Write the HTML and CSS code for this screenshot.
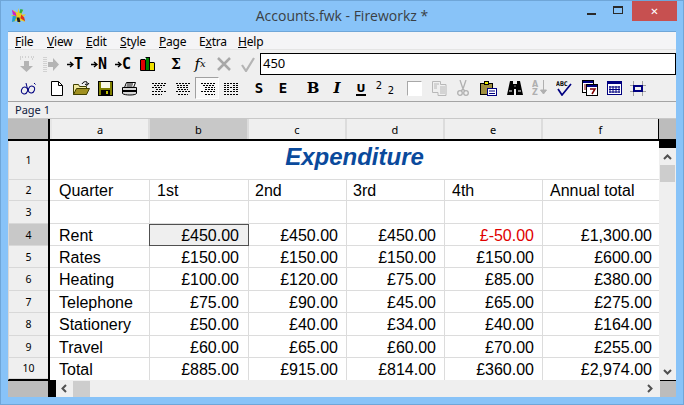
FILE: index.html
```html
<!DOCTYPE html>
<html lang="en">
<head>
<meta charset="utf-8">
<title>Accounts.fwk - Fireworkz *</title>
<link rel="stylesheet" href="styles.css">
</head>
<body>
<div class="window">
  <header class="titlebar">
    <svg class="appicon" width="17" height="17" viewBox="0 0 18 18"><path d="M9 1l1 5 4-3-2 5 5 0-4 3 3 5-5-2-1 4-2-4-5 2 2-5-4-2 5-1-3-5 5 3z" fill="#e8d020"/><path d="M2 3l4 3 1 4-4-2z" fill="#d020c0"/><path d="M3 9l4 1-2 5-3 1z" fill="#20a0d0"/><path d="M12 8l3 3 1 4-5-3z" fill="#e03020"/><path d="M7 11l3 0 1 5-3 0z" fill="#202020"/><path d="M11 2l3 1-2 4-2-1z" fill="#30b040"/></svg>
    <div class="wintitle">Accounts.fwk - Fireworkz *</div>
    <div class="winctl">
      <span class="wbtn"><i class="wmin"></i></span>
      <span class="wbtn"><i class="wmax"></i></span>
      <span class="wclose">✕</span>
    </div>
  </header>
  <div class="client">
    <nav class="menubar">
      <span><u>F</u>ile</span><span><u>V</u>iew</span><span><u>E</u>dit</span><span><u>S</u>tyle</span><span><u>P</u>age</span><span>E<u>x</u>tra</span><span><u>H</u>elp</span>
    </nav>
    <div class="toolbars">
      <div class="tbrow first">
        <span class="tb"><svg width="16" height="16" viewBox="0 0 16 16"><path d="M5 5h5v5h4l-6.500 6L1 10h4z" fill="#b4b4b4"/><path d="M1 1h3M1 3h2M12 1h3M13 3h2M6 1h1M9 1h1" stroke="#b4b4b4" stroke-dasharray="1 1"/></svg></span>
        <span class="tb"><svg width="16" height="17" viewBox="0 0 16 17"><path d="M5 6h5V2l6 6.500-6 6.500v-4H5z" fill="#b4b4b4"/><path d="M1 1v15M3 1v15" stroke="#b4b4b4" stroke-dasharray="1 1"/></svg></span>
        <span class="tb tbt"><svg class="toarrow" width="7" height="7" viewBox="0 0 7 7"><path d="M0 3.500h5M3 1l3 2.500L3 6" fill="none" stroke="#000" stroke-width="1.400"/></svg>T</span>
        <span class="tb tbt"><svg class="toarrow" width="7" height="7" viewBox="0 0 7 7"><path d="M0 3.500h5M3 1l3 2.500L3 6" fill="none" stroke="#000" stroke-width="1.400"/></svg>N</span>
        <span class="tb tbt"><svg class="toarrow" width="7" height="7" viewBox="0 0 7 7"><path d="M0 3.500h5M3 1l3 2.500L3 6" fill="none" stroke="#000" stroke-width="1.400"/></svg>C</span>
        <span class="tb"><svg width="15" height="14" viewBox="0 0 15 14"><rect x="1" y="3" width="5" height="10" fill="#e00000"/><rect x="6" y="1" width="4" height="12" fill="#008000"/><rect x="10" y="6" width="4" height="7" fill="#f0e000"/><path d="M.5 3v10.500h14V6M5.500 3v10M9.500 1v12M14.500 6v8M.5 2.500h5M5.500 .5h4.500M9.500 5.500h5" stroke="#000" fill="none"/></svg></span>
        <span class="tb sp5 tbsig">Σ</span>
        <span class="tb tbfx">f<sub>x</sub></span>
        <span class="tb"><svg width="14" height="14" viewBox="0 0 14 14"><path d="M1 1l12 12M13 1L1 13" stroke="#a8a8a8" stroke-width="2.500"/></svg></span>
        <span class="tb"><svg width="14" height="15" viewBox="0 0 14 15"><path d="M1 8l4 6L13 1" stroke="#b4b4b4" stroke-width="2.200" fill="none"/></svg></span>
        <div class="formula">450</div>
      </div>
      <div class="tbrow second">
        <span class="tb"><svg width="17" height="13" viewBox="0 0 17 13"><ellipse cx="4.500" cy="8.500" rx="3" ry="3.500" fill="none" stroke="#000080" transform="rotate(20 4.500 8.500)"/><ellipse cx="11.500" cy="7.500" rx="3" ry="3.500" fill="none" stroke="#000080" transform="rotate(20 11.500 7.500)"/><path d="M7.500 7.500C8 7 8 7 8.500 7M6 1l1.500 6M14 1l1.500 1.500" stroke="#000080" fill="none"/></svg></span>
        <span class="tb sp5"><svg width="12" height="15" viewBox="0 0 12 15"><path d="M.5 .5h7l4 4v10h-11z" fill="#fff" stroke="#000"/><path d="M7.500 .5v4h4" fill="none" stroke="#000"/></svg></span>
        <span class="tb"><svg width="17" height="14" viewBox="0 0 17 14"><path d="M.5 3.500h5l1 2h7v8H.5z" fill="#f0e8a0" stroke="#404000"/><path d="M.5 13.500l3-6h13l-3 6z" fill="#a09020" stroke="#404000"/><path d="M9 3c1-2 3-3 5-2l0 3M12 3l2 1.500L16 2" fill="none" stroke="#000"/></svg></span>
        <span class="tb"><svg width="15" height="15" viewBox="0 0 15 15"><rect x=".5" y=".5" width="14" height="14" fill="#808000" stroke="#000"/><rect x="3" y="1" width="9" height="6" fill="#f8f8e8"/><rect x="3" y="9" width="9" height="5" fill="#000"/><rect x="8" y="10" width="2" height="3" fill="#c0c000"/></svg></span>
        <span class="tb"><svg width="17" height="15" viewBox="0 0 17 15"><path d="M5.500 1.500h9l-2 5h-9z" fill="#fff" stroke="#000"/><path d="M6 3h6M5.500 5h6" stroke="#000"/><path d="M1.500 6.500h14v6c-1 2-12 2-14 0z" fill="#d8d8d8" stroke="#000"/><path d="M2 10h13" stroke="#000" stroke-width="2"/></svg></span>
        <span class="tb sp6"><svg class="dash" width="14" height="13" viewBox="0 0 14 13"><path d="M0 1.500h14M0 5.500h10M0 9.500h14M0 12.500h10M2 3.500h12M4 7.500h6"/></svg></span>
        <span class="tb"><svg class="dash" width="14" height="13" viewBox="0 0 14 13"><path d="M0 1.500h14M1 5.500h12M0 9.500h14M2 12.500h10M1 3.500h12M2 7.500h10"/></svg></span>
        <span class="tb tbsel"><svg class="dash" width="14" height="13" viewBox="0 0 14 13"><path d="M0 1.500h14M4 5.500h10M0 9.500h14M4 12.500h10M2 3.500h12M4 7.500h10"/></svg></span>
        <span class="tb"><svg class="dash" width="14" height="13" viewBox="0 0 14 13"><path d="M0 1.500h14M0 5.500h14M0 9.500h14M0 12.500h14M0 3.500h5M9 3.500h5M0 7.500h5M9 7.500h5"/></svg></span>
        <span class="tb sp4 tbs">S</span>
        <span class="tb tbs">E</span>
        <span class="tb sp6 tbb">B</span>
        <span class="tb tbi">I</span>
        <span class="tb tbu"><span class="uline">U</span></span>
        <span class="tbn up">2</span>
        <span class="tbn down">2</span>
        <span class="tb sp5"><i class="swatch"></i></span>
        <span class="tb sp1"><svg width="15" height="15" viewBox="0 0 15 15"><path d="M.5 .5h8v3h5.500v11h-8v-3h-5.500z" fill="none" stroke="#b8b8b8"/><path d="M2 3h5M2 5h3M2 7h3M8 6h5M8 8h5M8 10h5M8 12h5" stroke="#b8b8b8"/></svg></span>
        <span class="tb"><svg width="12" height="16" viewBox="0 0 12 16"><path d="M3 0l3 9 3-9M6 9L4 11M6 9l2 2" stroke="#b0b0b0" stroke-width="1.300" fill="none"/><circle cx="3" cy="13" r="2.300" fill="none" stroke="#b0b0b0" stroke-width="1.300"/><circle cx="9" cy="13" r="2.300" fill="none" stroke="#b0b0b0" stroke-width="1.300"/></svg></span>
        <span class="tb sp1"><svg width="17" height="15" viewBox="0 0 17 15"><rect x=".5" y="2.500" width="12" height="11" fill="#a09040" stroke="#000"/><rect x="4.500" y=".5" width="4" height="3" fill="#f0f000" stroke="#000"/><rect x="7.500" y="7.500" width="9" height="7" fill="#fff" stroke="#000080"/><path d="M9 10h6M9 12.500h6" stroke="#000080"/></svg></span>
        <span class="tb sp3"><svg width="16" height="14" viewBox="0 0 16 14"><path d="M3 0h3v3h4V0h3l3 14H9V8H7v6H0z" fill="#000"/><path d="M7.500 5h1" stroke="#fff"/><path d="M2 10h3M11 10h3" stroke="#fff"/></svg></span>
        <span class="tb sp1"><svg width="16" height="16" viewBox="0 0 16 16"><text class="az" x="0" y="7">A</text><text class="az" x="0" y="15">Z</text><path d="M11.500 0v11M8.500 10h6l-3 4z" stroke="#b0b0b0" fill="#b0b0b0"/></svg></span>
        <span class="tb"><svg width="16" height="16" viewBox="0 0 16 16"><text class="abc" x="0" y="6">ABC</text><path d="M2 9l4 6L15 4" fill="none" stroke="#000080" stroke-width="1.700"/></svg></span>
        <span class="tb sp2"><svg width="16" height="16" viewBox="0 0 16 16"><rect x=".5" y=".5" width="11" height="12" fill="#fff" stroke="#000"/><rect x="1" y="1" width="10" height="2" fill="#000080"/><rect x="4.500" y="4.500" width="11" height="11" fill="#fff" stroke="#000"/><rect x="5" y="5" width="10" height="2" fill="#000080"/><path d="M8 9h5l-3 5" fill="none" stroke="#800000" stroke-width="1.500"/><path d="M2 5h2M2 7h2M2 9h2" stroke="#800000"/></svg></span>
        <span class="tb"><svg width="15" height="14" viewBox="0 0 15 14"><rect x=".5" y=".5" width="14" height="13" fill="#fff" stroke="#000080"/><rect x="1" y="1" width="13" height="2" fill="#000080"/><path d="M3 5v7M6 5v7M9 5v7M12 5v7M2 6h11M2 8.500h11M2 11h11" stroke="#000080"/></svg></span>
        <span class="tb"><svg width="16" height="15" viewBox="0 0 16 15"><path d="M0 4.500h16M0 10.500h16M3.500 0v15M12.500 0v15" stroke="#a0a0a0"/><rect x="4" y="5" width="8" height="5" fill="#f0f0f0" stroke="#000080" stroke-width="2"/></svg></span>
      </div>
    </div>
    <div class="pagebar">Page 1</div>
    <div class="sheet">
      <div class="colhead">
        <div class="corner-l"></div>
        <div class="bar-v"></div>
        <div class="ch c1">a</div>
        <div class="ch c2 on">b</div>
        <div class="ch c3">c</div>
        <div class="ch c4">d</div>
        <div class="ch c5">e</div>
        <div class="ch c6">f</div>
        <div class="bar-v thin"></div>
        <div class="corner-r"></div>
      </div>
      <div class="sheetbody">
        <div class="rowheads">
          <div class="rh r1">1</div><div class="rh r2">2</div><div class="rh r3">3</div><div class="rh r4 on">4</div><div class="rh r5">5</div><div class="rh r6">6</div><div class="rh r7">7</div><div class="rh r8">8</div><div class="rh r9">9</div><div class="rh r10">10</div>
        </div>
        <div class="bar-v body"></div>
        <div class="cells">
          <div class="titlecell">Expenditure</div>
          <div class="row r2"><div class="cell c1">Quarter</div><div class="cell c2">1st</div><div class="cell c3">2nd</div><div class="cell c4">3rd</div><div class="cell c5">4th</div><div class="cell c6">Annual total</div></div>
          <div class="row r3"><div class="cell c1"></div><div class="cell c2"></div><div class="cell c3"></div><div class="cell c4"></div><div class="cell c5"></div><div class="cell c6"></div></div>
          <div class="row r4"><div class="cell c1">Rent</div><div class="cell c2 num sel">£450.00</div><div class="cell c3 num">£450.00</div><div class="cell c4 num">£450.00</div><div class="cell c5 num neg">£-50.00</div><div class="cell c6 num">£1,300.00</div></div>
          <div class="row r5"><div class="cell c1">Rates</div><div class="cell c2 num">£150.00</div><div class="cell c3 num">£150.00</div><div class="cell c4 num">£150.00</div><div class="cell c5 num">£150.00</div><div class="cell c6 num">£600.00</div></div>
          <div class="row r6"><div class="cell c1">Heating</div><div class="cell c2 num">£100.00</div><div class="cell c3 num">£120.00</div><div class="cell c4 num">£75.00</div><div class="cell c5 num">£85.00</div><div class="cell c6 num">£380.00</div></div>
          <div class="row r7"><div class="cell c1">Telephone</div><div class="cell c2 num">£75.00</div><div class="cell c3 num">£90.00</div><div class="cell c4 num">£45.00</div><div class="cell c5 num">£65.00</div><div class="cell c6 num">£275.00</div></div>
          <div class="row r8"><div class="cell c1">Stationery</div><div class="cell c2 num">£50.00</div><div class="cell c3 num">£40.00</div><div class="cell c4 num">£34.00</div><div class="cell c5 num">£40.00</div><div class="cell c6 num">£164.00</div></div>
          <div class="row r9"><div class="cell c1">Travel</div><div class="cell c2 num">£60.00</div><div class="cell c3 num">£65.00</div><div class="cell c4 num">£60.00</div><div class="cell c5 num">£70.00</div><div class="cell c6 num">£255.00</div></div>
          <div class="row r10"><div class="cell c1">Total</div><div class="cell c2 num">£885.00</div><div class="cell c3 num">£915.00</div><div class="cell c4 num">£814.00</div><div class="cell c5 num">£360.00</div><div class="cell c6 num">£2,974.00</div></div>
        </div>
        <div class="vscroll">
          <div class="vcap"></div>
          <svg class="arrow" width="9" height="6" viewBox="0 0 9 6"><path d="M1 5l3.500-3.500L8 5" fill="none" stroke="#505050" stroke-width="2"/></svg>
          <div class="vthumb"></div>
          <div class="grow"></div>
          <svg class="arrow" width="9" height="6" viewBox="0 0 9 6"><path d="M1 1l3.500 3.500L8 1" fill="none" stroke="#505050" stroke-width="2"/></svg>
        </div>
      </div>
      <div class="sheetfoot">
        <div class="corner-l foot"></div>
        <div class="foot-black"></div>
        <div class="hscroll">
          <svg class="arrow-h" width="6" height="9" viewBox="0 0 6 9"><path d="M5 1L1.500 4.500 5 8" fill="none" stroke="#505050" stroke-width="2"/></svg>
          <div class="hthumb"></div>
          <div class="grow"></div>
          <svg class="arrow-h" width="6" height="9" viewBox="0 0 6 9"><path d="M1 1l3.500 3.500L1 8" fill="none" stroke="#505050" stroke-width="2"/></svg>
        </div>
        <div class="corner-r foot"></div>
      </div>
    </div>
  </div>
</div>
</body>
</html>
```
FILE: styles.css
```css
* { box-sizing: border-box; }
html, body { margin: 0; padding: 0; }
body { width: 684px; height: 405px; overflow: hidden; background: #88c3f8; }
.window { width: 684px; height: 405px; display: flex; flex-direction: column; border: 1px solid #6fa6d8; padding: 0 7px 7px; }
.titlebar { height: 30px; flex: none; display: flex; align-items: center; position: relative; }
.appicon { margin-left: 2px; margin-top: -2px; }
.wintitle { position: absolute; left: 0; right: 0; text-align: center; font: 14px "Open Sans", sans-serif; color: #3a3f44; top: 5px; }
.winctl { position: absolute; right: -1px; top: 0; display: flex; }
.wbtn { width: 26px; height: 20px; display: flex; align-items: center; justify-content: center; margin-right: 1px; }
.wmin { width: 9px; height: 2px; background: #2a2a2a; margin-top: 6px; }
.wmax { width: 10px; height: 8px; border: 1px solid #2a2a2a; border-top-width: 2px; display: block; margin-top: -2px; }
.wclose { width: 45px; height: 20px; background: #c75050; color: #fff; font: bold 10px "DejaVu Sans", sans-serif; display: flex; align-items: center; justify-content: center; }
.client { flex: 1; display: flex; flex-direction: column; background: #efefef; border-top: 1px solid #6fa6d8; min-height: 0; }
.menubar { height: 18px; flex: none; background: #f4f4f6; display: grid; grid-template-columns: 32px 39px 34px 39px 40px 39px 1fr; padding-left: 7px; font: 12px "Noto Sans", sans-serif; letter-spacing: -.2px; color: #000; align-items: center; border-bottom: 1px solid #e4e4e4; padding-top: 1px; }
.toolbars { flex: none; height: 52px; border-bottom: 1px solid #a4a4a4; }
.tbrow { display: flex; align-items: center; }
.tbrow.first { height: 26px; padding: 3px 0 1px 7px; }
.tbrow.second { height: 24px; padding-left: 8px; }
.tb { width: 24px; height: 22px; flex: none; display: flex; align-items: center; justify-content: center; color: #000; }
.sp1 { margin-left: 1px; } .sp2 { margin-left: 2px; } .sp3 { margin-left: 3px; } .sp4 { margin-left: 4px; } .sp5 { margin-left: 5px; } .sp6 { margin-left: 6px; }
.tbt { font: bold 15px "DejaVu Sans Mono", monospace; }
.toarrow { flex: none; }
.tbsig { font: bold 14px "DejaVu Serif", serif; }
.tbfx { font: italic 15px "DejaVu Serif", serif; }
.tbfx sub { font-size: 10px; line-height: 0; }
.formula { flex: 1; height: 22px; background: #fff; border: 1px solid #000; font: 13px/19px "Noto Sans", sans-serif; padding: 0 0 0 2px; color: #000; margin-top: -1px; }
.dash { display: block; }
.dash path { stroke: #000; stroke-dasharray: 2 1; fill: none; }
.tbsel { background-color: #f8f8f8; border: 1px solid; border-color: #a0a0a0 #fff #fff #a0a0a0; padding-left: 2px; }
.tbs { font: bold 14px "DejaVu Sans Mono", monospace; }
.tbb { font: bold 15px "DejaVu Serif", serif; }
.tbi { font: italic bold 15px "DejaVu Serif", serif; }
.tbu { font: bold 11px "DejaVu Sans", sans-serif; }
.uline { border-bottom: 2px solid #000; line-height: 11px; padding: 0 1px; margin-top: 2px; }
.tbn { width: 12px; flex: none; font: 10px "DejaVu Sans", sans-serif; color: #000; text-align: center; }
.tbn.up { transform: translateY(-3px); }
.tbn.down { transform: translateY(2px); }
.swatch { width: 15px; height: 15px; background: #fff; border: 1px solid; border-color: #a8a8a8 #fff #fff #a8a8a8; display: block; }
.az { font: bold 8px "DejaVu Sans", sans-serif; fill: #b0b0b0; }
.abc { font: bold 6.500px "DejaVu Sans Mono", monospace; fill: #000; }
.pagebar { height: 17px; flex: none; font: 11px "Noto Sans", sans-serif; color: #102040; padding: 0 0 0 7px; border-bottom: 1px solid #c8c8c8; }
.sheet { flex: 1; display: flex; flex-direction: column; min-height: 0; }
.colhead { height: 22px; flex: none; display: flex; border-bottom: 2px solid #000; background: #e6e6e6; }
.corner-l { width: 40px; flex: none; background: #bcbcbc; }
.corner-r { width: 17px; flex: none; background: #bcbcbc; }
.bar-v { width: 2px; flex: none; background: #000; margin-right: 2px; }
.bar-v.thin { width: 1px; margin: 0; }
.ch { flex: none; text-align: center; font: 11px/21px "Noto Sans", sans-serif; color: #000; background: #efefef; border-right: 2px solid #dcdcdc; height: 20px; }
.ch.c1 { width: 98px; }
.ch.c2 { width: 99px; }
.ch.c3, .ch.c4, .ch.c5 { width: 98px; }
.ch.c6 { width: 115px; border-right: 0; }
.ch.on { background: #c8c8c8; }
.sheetbody { height: 239px; flex: none; display: flex; }
.rowheads { width: 40px; flex: none; background: #bcbcbc; border-left: 1px solid #d8d8d8; border-bottom: 1px solid #000; }
.rh { display: flex; align-items: center; justify-content: center; font: 10.500px "Noto Sans", sans-serif; color: #000; background: #efefef; border-bottom: 1px solid #d8d8d8; }
.rh.on { background: #c8c8c8; }
.rh.r1 { height: 39px; } .rh.r2 { height: 21px; } .rh.r3 { height: 23px; } .rh.r4 { height: 22px; } .rh.r5 { height: 22px; } .rh.r6 { height: 23px; } .rh.r7 { height: 22px; } .rh.r8 { height: 23px; } .rh.r9 { height: 22px; } .rh.r10 { height: 21px; }
.bar-v.body { width: 2px; margin: 0; }
.cells { width: 609px; flex: none; background: #fff; font: 16px "Liberation Sans", Arial, sans-serif; color: #000; overflow: hidden; }
.titlecell { height: 39px; text-align: center; font: italic bold 24px/32px "Liberation Sans", Arial, sans-serif; color: #0a4a9c; border-bottom: 1px solid #dcdcdc; }
.row { display: flex; border-bottom: 1px solid #dcdcdc; }
.row.r2 { height: 21px; } .row.r3 { height: 23px; } .row.r4 { height: 22px; } .row.r5 { height: 22px; } .row.r6 { height: 23px; } .row.r7 { height: 22px; } .row.r8 { height: 23px; } .row.r9 { height: 22px; } .row.r10 { height: 22px; border-bottom: 0; }
.cell { flex: none; border-right: 1px solid #dcdcdc; padding: 2px 8px 0 7px; line-height: 20px; white-space: nowrap; overflow: hidden; }
.row.r2 .cell { padding-top: 1px; }
.cell.c1 { width: 100px; padding-left: 9px; }
.cell.c2 { width: 99px; padding-right: 9px; }
.cell.c3, .cell.c4 { width: 98px; padding-left: 6px; }
.cell.c5 { width: 98px; }
.cell.c6 { width: 116px; border-right: 0; padding-right: 7px; }
.num { text-align: right; }
.neg { color: #e00000; }
.cell.sel { background: #efefef; outline: 1px solid #505050; outline-offset: -1px; margin: 0 0 -1px -1px; height: 22px; width: 100px; position: relative; }
.vscroll { width: 17px; flex: none; background: #efefef; display: flex; flex-direction: column; align-items: center; }
.vcap { width: 17px; height: 7px; background: #000; flex: none; }
.arrow { flex: none; margin-top: 6px; }
.vscroll > .arrow:last-child { margin: 0 0 5px; }
.vthumb { width: 15px; height: 17px; background: #cdcdcd; margin-top: 5px; flex: none; }
.grow { flex: 1; }
.sheetfoot { flex: 1; display: flex; border-top: 1px solid #000; background: #efefef; }
.corner-l.foot { width: 40px; }
.foot-black { width: 8px; flex: none; background: #000; margin-top: -1px; }
.hscroll { flex: 1; display: flex; align-items: center; padding: 0 5px; background: #efefef; margin-top: -1px; }
.arrow-h { flex: none; }
.hthumb { width: 17px; height: 16px; background: #cdcdcd; margin-left: 6px; flex: none; }
.hscroll > .arrow-h:last-child { margin-right: 2px; }
.corner-r.foot { width: 16px; }
```
